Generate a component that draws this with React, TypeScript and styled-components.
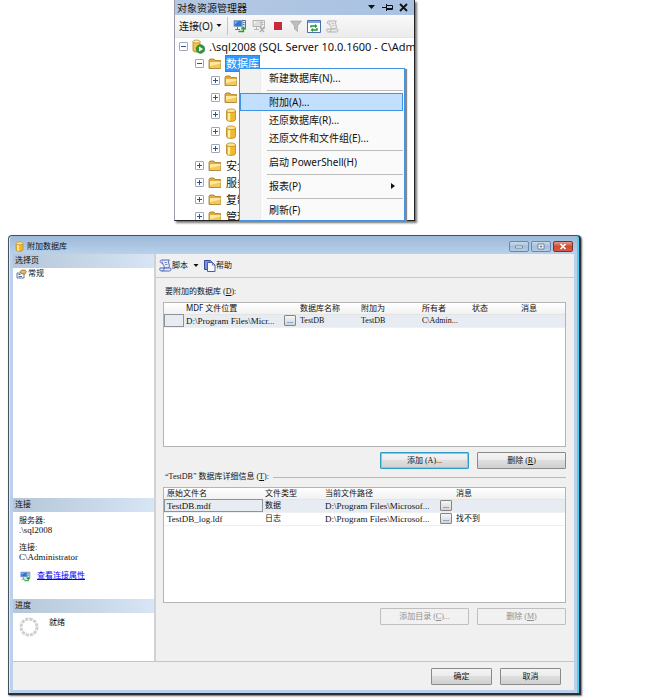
import React from 'react';
import styled, { createGlobalStyle, css } from 'styled-components';

const GlobalStyle = createGlobalStyle`
  * { box-sizing: border-box; }
  body { margin: 0; background: #fff; color: #111; }
  button { font: inherit; color: inherit; margin: 0; padding: 0; cursor: default; }
  svg { display: block; flex: none; }
`;

const Page = styled.main`
  display: flex;
  flex-direction: column;
  gap: 14px;
  padding: 0 74px 4px 8px;
  font-family: 'Liberation Serif', 'Noto Sans CJK SC', sans-serif;
  font-size: 8px;
  line-height: 12px;
`;

/* Object explorer */

const Explorer = styled.section`
  position: relative;
  align-self: center;
  width: 241px;
  height: 221px;
  background: #fff;
  border-left: 1px solid #9a9aa8;
  border-right: 1px solid #222;
  border-bottom: 1px solid #222;
  box-shadow: 2px 2px 2px #777;
  font-family: 'Noto Sans', 'Noto Sans CJK SC', sans-serif;
  font-size: 11px;
  line-height: 16px;
`;

const ExplorerTitle = styled.header`
  display: flex;
  align-items: center;
  gap: 6px;
  height: 15px;
  padding: 0 6px 0 2px;
  background: linear-gradient(90deg, #b4c8e3, #a9c2e2);
  font-size: 10px;
  h2 { margin: 0; font: inherit; flex: 1; line-height: 12px; }
`;

const GhostButton = styled.button`
  display: flex;
  align-items: center;
  background: none;
  border: 0;
`;

const ExplorerTools = styled.div`
  display: flex;
  align-items: center;
  gap: 5px;
  height: 23px;
  padding: 0 4px;
  background: linear-gradient(#f9f9f9, #ececec);
  border-bottom: 1px solid #e2e2e2;
`;

const ConnectButton = styled(GhostButton)`
  gap: 3px;
  height: 18px;
  padding-right: 5px;
  border-right: 1px solid #c4c4c4;
  font-size: 10px;
  white-space: nowrap;
`;

const Tree = styled.ul`
  list-style: none;
  margin: 0;
  padding: 0;
  height: 182px;
  overflow: hidden;
`;

const TreeRow = styled.li<{ $level: number }>`
  display: flex;
  align-items: center;
  gap: 4px;
  height: 17px;
  padding-left: ${(p) => 4 + p.$level * 16}px;
  white-space: nowrap;
`;

const Toggle = styled.button`
  flex: none;
  width: 9px;
  height: 9px;
  background: #fff;
  border: 1px solid #a0a8b8;
  border-radius: 1px;
  svg { width: 7px; height: 7px; }
`;

const NodeLabel = styled.span<{ $selected?: boolean }>`
  line-height: 15px;
  ${(p) =>
    p.$selected &&
    css`
      background: #3399ff;
      color: #fff;
      outline: 1px solid #a56a35;
    `}
`;

const Menu = styled.div`
  position: absolute;
  top: 68px;
  left: 64px;
  width: 166px;
  height: 153px;
  padding-right: 1px;
  border: 1px solid #3f94e4;
  background: linear-gradient(90deg, #f1f1f1 20px, #dcdcdc 20px, #fafafa 21px);
  box-shadow: 2px 1px 1px #888;
  font-size: 10px;
`;

const MenuItem = styled.button<{ $active?: boolean }>`
  display: flex;
  align-items: center;
  justify-content: space-between;
  width: 100%;
  height: 18px;
  padding: 0 7px 0 28px;
  border: 1px solid ${(p) => (p.$active ? '#3f94e4' : 'transparent')};
  background: ${(p) => (p.$active ? '#c2dffd' : 'none')};
  white-space: nowrap;
`;

const MenuRule = styled.hr`
  height: 1px;
  margin: 3px 0 2px 27px;
  border: 0;
  background: #bdbdbd;
`;

/* Attach dialog */

const Dialog = styled.section`
  display: flex;
  flex-direction: column;
  padding: 0 5px 3px 4px;
  border: 1px solid #48525e;
  border-right: 2px solid #2a3036;
  border-bottom: 2px solid #2a3036;
  border-radius: 4px 4px 0 0;
  background: linear-gradient(#9db9d8, #b9d1ea 18px);
  box-shadow: inset -2px 0 0 #4fcdf2, inset 1px 0 0 #d9ecfa, 1px 1px 2px #666;
`;

const TitleBar = styled.header`
  display: flex;
  align-items: center;
  gap: 3px;
  height: 18px;
  padding: 3px 1px 0 2px;
  h1 { flex: 1; margin: 0; font-size: 8px; font-weight: 400; }
`;

const WindowButtons = styled.div`
  display: flex;
  gap: 2px;
`;

const WindowButton = styled.button<{ $close?: boolean }>`
  display: flex;
  align-items: center;
  justify-content: center;
  width: 20px;
  height: 11px;
  border: 1px solid ${(p) => (p.$close ? '#7d2f2a' : '#6d87a6')};
  border-radius: 2px;
  background: ${(p) =>
    p.$close
      ? 'linear-gradient(#e39b8e, #cf4b35 50%, #d65c42)'
      : 'linear-gradient(#c6d9ee, #a5c0de 50%, #b4cce6)'};
`;

const Body = styled.div`
  display: grid;
  grid-template-columns: 143px minmax(0, 1fr);
  background: #f0f0f0;
`;

const Sidebar = styled.aside`
  display: flex;
  flex-direction: column;
  background: #fff;
  border-right: 2px solid #cfd2d6;
`;

const SideSection = styled.section<{ $height?: number }>`
  ${(p) => (p.$height ? `min-height: ${p.$height}px;` : 'flex: 1;')}
  h2 {
    height: 14px;
    margin: 0;
    padding-left: 2px;
    font-size: 8px;
    font-weight: 400;
    line-height: 13px;
    background: linear-gradient(90deg, #b4c6d8, #d7e5f5);
  }
`;

const PageLink = styled(GhostButton)`
  gap: 1px;
  padding: 0 3px;
  height: 11px;
`;

const Facts = styled.dl`
  margin: 0;
  padding: 4px 6px 0;
  line-height: 8px;
  dt { line-height: 10px; }
  dd { margin: 0 0 9px; font-size: 9px; }
`;

const PropertiesLink = styled.a`
  display: flex;
  align-items: center;
  gap: 6px;
  padding: 0 7px;
  color: #00f;
`;

const Progress = styled.div`
  display: flex;
  gap: 10px;
  padding: 4px 6px;
`;

const Content = styled.div`
  display: flex;
  flex-direction: column;
`;

const Tools = styled.div`
  display: flex;
  align-items: center;
  gap: 5px;
  height: 24px;
  padding: 0 3px;
  border-bottom: 1px solid #c9c9c9;
`;

const ToolButton = styled(GhostButton)``;

const Form = styled.div`
  display: flex;
  flex-direction: column;
  padding: 8px 8px 34px 7px;
`;

const Caption = styled.h3<{ $rule?: boolean }>`
  display: flex;
  align-items: center;
  gap: 4px;
  margin: 0 0 4px;
  padding-left: 2px;
  font-size: 8px;
  font-weight: 400;
  ${(p) => p.$rule && css`&::after { content: ''; flex: 1; height: 1px; background: #b9b9b9; }`}
`;

const GridBox = styled.div<{ $height: number }>`
  min-height: ${(p) => p.$height}px;
  border: 1px solid #b4b4b4;
  background: #fff;
`;

const Grid = styled.table`
  width: 100%;
  table-layout: fixed;
  border-collapse: collapse;
  th, td {
    height: 13px;
    padding: 0 2px;
    text-align: left;
    font-weight: 400;
    line-height: 12px;
    white-space: nowrap;
    overflow: hidden;
  }
  th {
    height: 11px;
    line-height: 10px;
    font-family: 'Noto Sans', 'Noto Sans CJK SC', sans-serif;
    background: linear-gradient(#fff, #f1f1f1);
    border-bottom: 1px solid #e4e4e4;
  }
  tr > :first-child { padding-left: 3px; }
`;

const GridRow = styled.tr<{ $selected?: boolean }>`
  background: ${(p) => (p.$selected ? '#e6ecf2' : '#fff')};
  border-bottom: 1px solid #eef1f4;
`;

const NameCell = styled.td<{ $focused?: boolean }>`
  font-size: 9px;
  ${(p) =>
    p.$focused &&
    css`
      outline: 1px solid #8d929c;
      outline-offset: -1px;
    `}
`;

const PathCell = styled.td`
  font-size: 9px;
`;

const Browse = styled.button`
  display: flex;
  align-items: flex-end;
  justify-content: center;
  width: 12px;
  height: 11px;
  border: 1px solid #858585;
  border-radius: 1px;
  background: linear-gradient(#f6f6f6, #d4d4d4);
  line-height: 8px;
`;

const ButtonRow = styled.div<{ $footer?: boolean }>`
  display: flex;
  justify-content: flex-end;
  gap: 8px;
  padding: 5px 0 2px;
  ${(p) =>
    p.$footer &&
    css`
      padding: 6px 13px 5px;
      background: #f0f0f0;
      border-top: 1px solid #c3c5c9;
    `}
`;

const PushButton = styled.button<{ $primary?: boolean; $narrow?: boolean }>`
  width: ${(p) => (p.$narrow ? 61 : 89)}px;
  height: 17px;
  border: 1px solid ${(p) => (p.$primary ? '#2e9cc9' : '#8a8a8a')};
  border-radius: 1px;
  background: linear-gradient(#f4f4f4, #ebebeb 50%, #dedede 50%, #d0d0d0);
  box-shadow: ${(p) => (p.$primary ? 'inset 0 0 0 1px #6fd2f5' : 'none')};
  line-height: 14px;
  &:disabled {
    border-color: #bfbfbf;
    background: #f1f1f1;
    color: #909090;
  }
`;

/* Icons */

const Caret = () => (
  <svg width="6" height="4" viewBox="0 0 6 4"><path d="M.5 0h5L3 3z" fill="#111" /></svg>
);

const Folder = () => (
  <svg width="14" height="12" viewBox="0 0 14 12">
    <path d="M1 2.500 2 1h4l1 1.500h5.500V10.500H1z" fill="#e3ab3a" stroke="#a47a22" strokeWidth=".8" />
    <path d="M2 4h10.500v6H2z" fill="#f2c95c" />
    <path d="M2 4h10.500v1.500L2 8z" fill="#ffe9a0" />
  </svg>
);

const Cylinder = ({ width = 12, height = 14 }: { width?: number; height?: number }) => (
  <svg width={width} height={height} viewBox="0 0 12 14">
    <path d="M1.500 3v8.500c0 2.500 9 2.500 9 0V3z" fill="#f0b92e" stroke="#b5821a" strokeWidth=".8" />
    <path d="M3 4.500h2.200v8H3z" fill="#fff0a8" />
    <ellipse cx="6" cy="2.800" rx="4.500" ry="1.900" fill="#ffe58a" stroke="#bd8b20" strokeWidth=".8" />
  </svg>
);

const ServerIcon = () => (
  <svg width="13" height="15" viewBox="0 0 13 15">
    <path d="M1 2.500v9c0 2 7 2 7 0v-9z" fill="#f3c64a" stroke="#b5821a" strokeWidth=".8" />
    <ellipse cx="4.500" cy="2.500" rx="3.500" ry="1.500" fill="#fff0b0" stroke="#b5821a" strokeWidth=".7" />
    <circle cx="8.500" cy="10" r="4.300" fill="#2f9a3a" stroke="#17682a" strokeWidth=".6" />
    <path d="M7 7.500v5l4-2.500z" fill="#fff" />
  </svg>
);

const Computers = ({ kind = 'on', size = 14 }: { kind?: 'on' | 'off'; size?: number }) => {
  const on = kind === 'on';
  return (
    <svg width={size} height={size} viewBox="0 0 14 14">
      <path d="M9 1.500h3.500v8H9z" fill={on ? '#e4ebf4' : '#eee'} stroke={on ? '#5b7597' : '#b5b5b5'} />
      <path d="M10 3.500h1.500M10 5.500h1.500" stroke={on ? '#5b7597' : '#b5b5b5'} />
      <path d="M1 1.500h8v6H1z" fill={on ? '#2c75e0' : '#ddd'} stroke={on ? '#8aa4c8' : '#b5b5b5'} />
      <path d="M4.500 8v2M2 10.500h5" stroke={on ? '#5b7597' : '#b5b5b5'} />
      <path d="M2 2.500h3L2 5z" fill={on ? '#8fc3ff' : '#f4f4f4'} />
      {on ? (
        <path d="M5.500 12.500h5V8.500L8.500 10.500M10.500 8.500l2 2" fill="none" stroke="#20a02c" strokeWidth="1.300" />
      ) : (
        <path d="m8 8 4 5m0-5-4 5" stroke="#aaa" strokeWidth="1.300" />
      )}
    </svg>
  );
};

const Filter = () => (
  <svg width="12" height="12" viewBox="0 0 12 12">
    <path d="M.5 1h11L7.500 6v5.500L4.500 9V6z" fill="#bdbdbd" stroke="#a5a5a5" strokeWidth=".7" />
  </svg>
);

const Refresh = () => (
  <svg width="14" height="13" viewBox="0 0 14 13">
    <path d="M.5.500h13v12H.5z" fill="#fff" stroke="#4a6fae" />
    <path d="M1 1h12v2H1z" fill="#7fa5e0" />
    <path d="M4 7.500V6h4M10 8v2H6" fill="none" stroke="#249236" strokeWidth="1.400" />
    <path d="M8 4v4l2.500-2zM6 8v4L3.500 10z" fill="#249236" />
  </svg>
);

const Scroll = ({ color, fill }: { color: string; fill: string }) => (
  <svg width="13" height="13" viewBox="0 0 13 13">
    <path d="M3 1h7.500C9 2 9.500 3.500 10 5s.5 3-.5 4H5C6 7 3.500 5.500 3.500 4z" fill={fill} stroke={color} />
    <path d="M3 1C.5 1 .5 4 3 4h1M5 9H1c-1 3 1 3 2 3h7.500c2 0 2-3 .5-3H5c.5 1.500-.5 3-2 3" fill={fill} stroke={color} />
    <path d="M5.500 3.500h2.500M6 5.500h2.500" stroke={color} strokeWidth=".7" />
  </svg>
);

const HelpPages = () => (
  <svg width="12" height="12" viewBox="0 0 12 12">
    <path d="M.5.500h6l1 1v8h-7z" fill="#7c92dc" stroke="#37499c" />
    <path d="M3.500 2.500h5l2.500 2.500v6.500H3.500z" fill="#f6f8ff" stroke="#4a5cab" />
    <path d="M8.500 2.500V5H11" fill="none" stroke="#4a5cab" strokeWidth=".8" />
  </svg>
);

const PageIcon = () => (
  <svg width="11" height="10" viewBox="0 0 11 10">
    <path d="M1 4h7v5H1z" fill="#fff" stroke="#66768e" />
    <path d="M2.500 5.500h2M2.500 7.500h3.500" stroke="#456ba8" />
    <path d="M4 2.500 6 1h3l1.500 1.500L9 5H6z" fill="#e2b95b" stroke="#8b6b2b" strokeWidth=".7" />
  </svg>
);

const Spinner = () => (
  <svg width="20" height="20" viewBox="0 0 20 20">
    <circle cx="10" cy="10" r="8" fill="none" stroke="#d0d0d0" strokeWidth="3" strokeDasharray="3.200 1" />
  </svg>
);

const ToggleMark = ({ open }: { open: boolean }) => (
  <svg viewBox="0 0 7 7"><path d={open ? 'M1 3.500h5' : 'M1 3.500h5M3.500 1v5'} stroke="#34518c" /></svg>
);

/* Data */

type Node = { level: number; icon: 'server' | 'folder' | 'db'; text?: string; open?: boolean; selected?: boolean };

const nodes: Node[] = [
  { level: 0, icon: 'server', text: '.\\sql2008 (SQL Server 10.0.1600 - C\\Adm', open: true },
  { level: 1, icon: 'folder', text: '数据库', open: true, selected: true },
  { level: 2, icon: 'folder' },
  { level: 2, icon: 'folder' },
  { level: 2, icon: 'db' },
  { level: 2, icon: 'db' },
  { level: 2, icon: 'db' },
  { level: 1, icon: 'folder', text: '安全' },
  { level: 1, icon: 'folder', text: '服务' },
  { level: 1, icon: 'folder', text: '复制' },
  { level: 1, icon: 'folder', text: '管理' },
];

const menuGroups = [
  ['新建数据库(N)...'],
  ['附加(A)...', '还原数据库(R)...', '还原文件和文件组(E)...'],
  ['启动 PowerShell(H)'],
  ['报表(P)'],
  ['刷新(F)'],
];

const files = [
  { name: 'TestDB.mdf', type: '数据', path: 'D:\\Program Files\\Microsof...', message: '' },
  { name: 'TestDB_log.ldf', type: '日志', path: 'D:\\Program Files\\Microsof...', message: '找不到' },
];

const nodeIcons = { server: <ServerIcon />, folder: <Folder />, db: <Cylinder width={14} /> };

function ObjectExplorer() {
  return (
    <Explorer>
      <ExplorerTitle>
        <h2>对象资源管理器</h2>
        <GhostButton aria-label="窗口位置">
          <svg width="9" height="5" viewBox="0 0 9 5"><path d="M1 0h7L4.500 4z" fill="#111" /></svg>
        </GhostButton>
        <GhostButton aria-label="自动隐藏">
          <svg width="11" height="9" viewBox="0 0 11 9">
            <path d="M0 4.500h4M4.500 1v7M5 2.500h5.500v4H5M5 5.500h5.500" fill="none" stroke="#111" />
          </svg>
        </GhostButton>
        <GhostButton aria-label="关闭">
          <svg width="9" height="9" viewBox="0 0 9 9"><path d="m1 1 7 7m0-7L1 8" stroke="#111" strokeWidth="1.800" /></svg>
        </GhostButton>
      </ExplorerTitle>
      <ExplorerTools>
        <ConnectButton>连接(O)<Caret /></ConnectButton>
        <GhostButton aria-label="连接"><Computers /></GhostButton>
        <GhostButton aria-label="断开连接"><Computers kind="off" /></GhostButton>
        <GhostButton aria-label="停止">
          <svg width="14" height="8" viewBox="0 0 14 8"><path d="M3 0h8v8H3z" fill="#c8283c" /></svg>
        </GhostButton>
        <GhostButton aria-label="筛选"><Filter /></GhostButton>
        <GhostButton aria-label="刷新"><Refresh /></GhostButton>
        <GhostButton aria-label="脚本"><Scroll color="#b3b3b3" fill="#ececec" /></GhostButton>
      </ExplorerTools>
      <Tree>
        {nodes.map((node, i) => (
          <TreeRow key={i} $level={node.level}>
            <Toggle aria-label={node.open ? '折叠' : '展开'}><ToggleMark open={!!node.open} /></Toggle>
            {nodeIcons[node.icon]}
            {node.text && <NodeLabel $selected={node.selected}>{node.text}</NodeLabel>}
          </TreeRow>
        ))}
      </Tree>
      <Menu role="menu">
        {menuGroups.map((group, i) => (
          <React.Fragment key={i}>
            {i > 0 && <MenuRule />}
            {group.map((text) => (
              <MenuItem key={text} role="menuitem" $active={text.startsWith('附加')}>
                {text}
                {text.startsWith('报表') && (
                  <svg width="4" height="6" viewBox="0 0 4 6"><path d="M0 0v6l4-3z" fill="#111" /></svg>
                )}
              </MenuItem>
            ))}
          </React.Fragment>
        ))}
      </Menu>
    </Explorer>
  );
}

function AttachDialog() {
  return (
    <Dialog>
      <TitleBar>
        <Cylinder width={9} height={11} />
        <h1>附加数据库</h1>
        <WindowButtons>
          <WindowButton aria-label="最小化">
            <svg width="8" height="4" viewBox="0 0 8 4"><path d="M.5 1h7v2h-7z" fill="#fff" stroke="#5a6a80" strokeWidth=".7" /></svg>
          </WindowButton>
          <WindowButton aria-label="最大化">
            <svg width="8" height="7" viewBox="0 0 8 7"><path d="M1 1h6v5H1zM3 3h2v1H3z" fill="#fff" stroke="#5a6a80" strokeWidth=".8" /></svg>
          </WindowButton>
          <WindowButton aria-label="关闭" $close>
            <svg width="8" height="7" viewBox="0 0 8 7"><path d="m1.500 1 5 5m0-5-5 5" stroke="#fff" strokeWidth="1.700" /></svg>
          </WindowButton>
        </WindowButtons>
      </TitleBar>
      <Body>
        <Sidebar>
          <SideSection>
            <h2>选择页</h2>
            <PageLink><PageIcon />常规</PageLink>
          </SideSection>
          <SideSection $height={101}>
            <h2>连接</h2>
            <Facts>
              <dt>服务器:</dt>
              <dd>.\sql2008</dd>
              <dt>连接:</dt>
              <dd>C\Administrator</dd>
            </Facts>
            <PropertiesLink href="#properties"><Computers size={11} />查看连接属性</PropertiesLink>
          </SideSection>
          <SideSection $height={62}>
            <h2>进度</h2>
            <Progress><Spinner />就绪</Progress>
          </SideSection>
        </Sidebar>
        <Content>
          <Tools>
            <ToolButton><Scroll color="#5269b5" fill="#e4ebfb" />脚本</ToolButton>
            <GhostButton aria-label="脚本选项"><Caret /></GhostButton>
            <ToolButton><HelpPages />帮助</ToolButton>
          </Tools>
          <Form>
            <Caption id="databases"><span>要附加的数据库 (<u>D</u>):</span></Caption>
            <GridBox $height={145}>
              <Grid aria-labelledby="databases">
                <colgroup>
                  <col width="20" /><col width="98" /><col width="16" /><col width="61" />
                  <col width="61" /><col width="50" /><col width="49" /><col />
                </colgroup>
                <thead>
                  <tr>
                    <th /><th colSpan={2}>MDF 文件位置</th><th>数据库名称</th><th>附加为</th>
                    <th>所有者</th><th>状态</th><th>消息</th>
                  </tr>
                </thead>
                <tbody>
                  <GridRow $selected>
                    <NameCell $focused /><PathCell>D:\Program Files\Micr...</PathCell>
                    <td><Browse aria-label="浏览">...</Browse></td>
                    <td>TestDB</td><td>TestDB</td><td>C\Admin...</td><td /><td />
                  </GridRow>
                </tbody>
              </Grid>
            </GridBox>
            <ButtonRow>
              <PushButton $primary>添加 (A)...</PushButton>
              <PushButton>删除 (<u>R</u>)</PushButton>
            </ButtonRow>
            <Caption id="details" $rule><span>“TestDB” 数据库详细信息 (<u>T</u>):</span></Caption>
            <GridBox $height={116}>
              <Grid aria-labelledby="details">
                <colgroup>
                  <col width="99" /><col width="60" /><col width="115" /><col width="16" /><col />
                </colgroup>
                <thead>
                  <tr><th>原始文件名</th><th>文件类型</th><th colSpan={2}>当前文件路径</th><th>消息</th></tr>
                </thead>
                <tbody>
                  {files.map((file, i) => (
                    <GridRow key={file.name} $selected={i === 0}>
                      <NameCell $focused={i === 0}>{file.name}</NameCell>
                      <td>{file.type}</td>
                      <PathCell>{file.path}</PathCell>
                      <td><Browse aria-label="浏览">...</Browse></td>
                      <td>{file.message}</td>
                    </GridRow>
                  ))}
                </tbody>
              </Grid>
            </GridBox>
            <ButtonRow>
              <PushButton disabled>添加目录 (<u>C</u>)...</PushButton>
              <PushButton disabled>删除 (<u>M</u>)</PushButton>
            </ButtonRow>
          </Form>
        </Content>
      </Body>
      <ButtonRow $footer>
        <PushButton $narrow>确定</PushButton>
        <PushButton $narrow>取消</PushButton>
      </ButtonRow>
    </Dialog>
  );
}

export default function App() {
  return (
    <>
      <GlobalStyle />
      <Page>
        <ObjectExplorer />
        <AttachDialog />
      </Page>
    </>
  );
}
